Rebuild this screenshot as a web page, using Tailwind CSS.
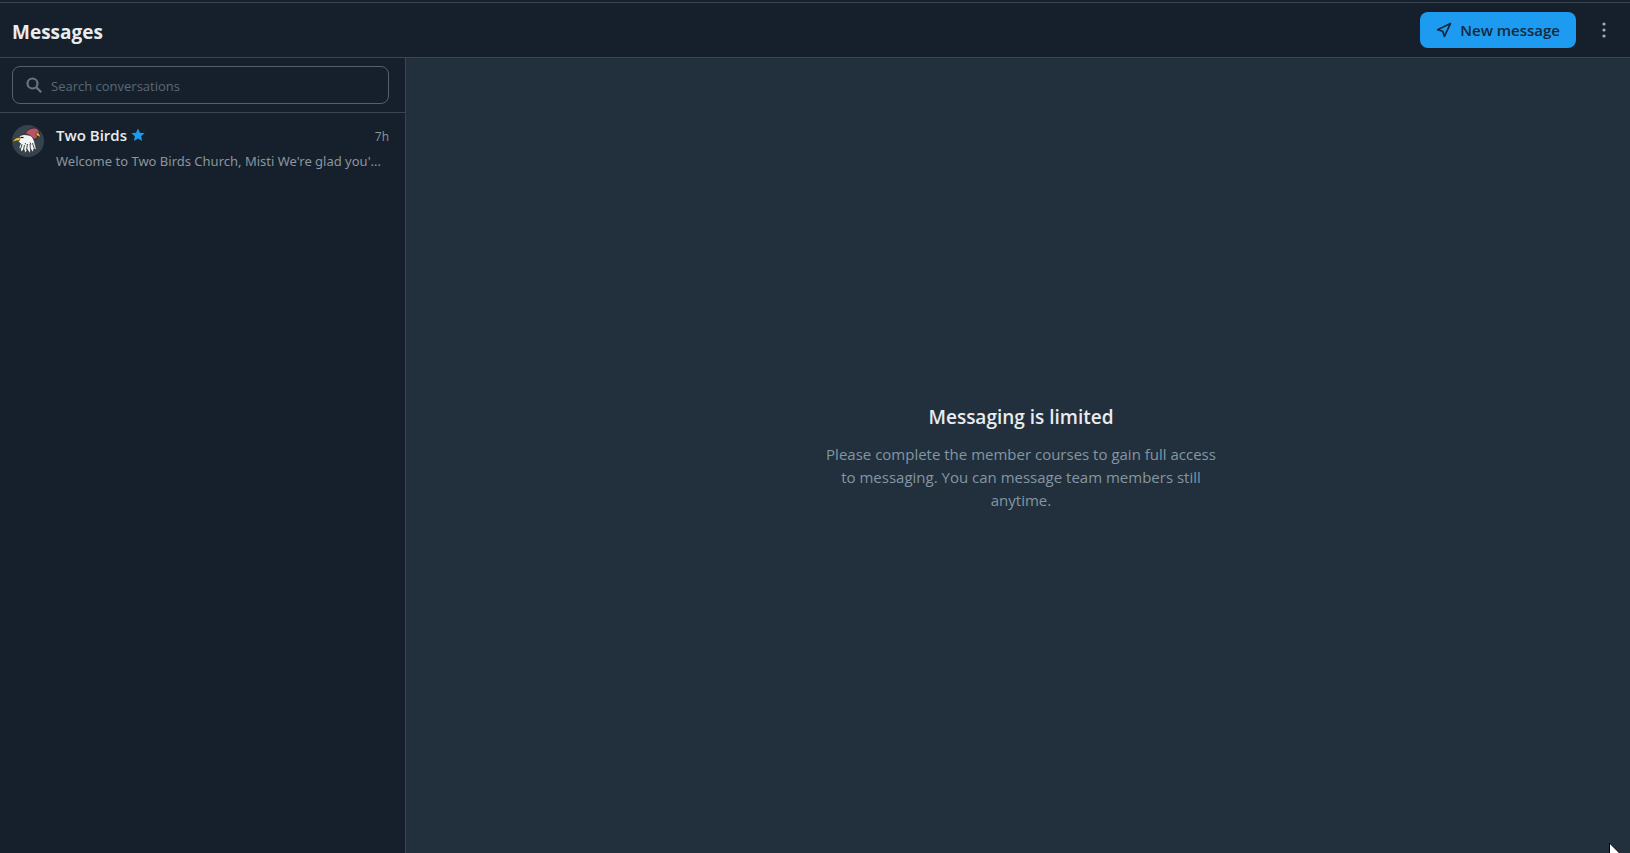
<!DOCTYPE html>
<html lang="en">
<head>
  <meta charset="UTF-8">
  <meta name="viewport" content="width=device-width, initial-scale=1.0">
  <title>Messages</title>
  <script src="https://cdn.jsdelivr.net/npm/@tailwindcss/browser@4"></script>
</head>
<body class="flex flex-col h-screen overflow-hidden bg-[#16202c] pt-[2px] font-['Open_Sans','Noto_Sans',sans-serif] text-[#e9ecee]">
  <!-- Header -->
  <header class="flex items-center justify-between h-14 shrink-0 border-y border-[#39454f] pl-3 pr-[14px]">
    <h1 class="text-[19px] leading-7 font-bold pt-1">Messages</h1>
    <div class="flex items-center gap-4">
      <button type="button" class="flex items-center gap-2 h-9 px-4 rounded-lg bg-[#1d9bf0] text-[#14293b] text-[15px] font-semibold">
        <svg class="size-4" viewBox="0 0 16 16" fill="none" stroke="currentColor" stroke-width="1.7" stroke-linejoin="round" aria-hidden="true">
          <path d="M14.4 1.6 1.6 7.7l5.2 1.5 1.6 5.2z"/>
        </svg>
        New message
      </button>
      <button type="button" aria-label="More options" class="flex items-center justify-center w-6 h-9 text-[#a3abb2]">
        <svg class="w-1 h-4" viewBox="0 0 4 16" fill="currentColor" aria-hidden="true">
          <circle cx="2" cy="2" r="1.6"/>
          <circle cx="2" cy="8" r="1.6"/>
          <circle cx="2" cy="14" r="1.6"/>
        </svg>
      </button>
    </div>
  </header>

  <div class="flex flex-1 min-h-0">
    <!-- Conversations -->
    <aside class="w-[406px] shrink-0 border-r border-[#39454f]">
      <div class="border-b border-[#39454f] pl-3 pr-4 py-2">
        <label for="search" class="flex items-center gap-2 h-[38px] px-3 rounded-lg border border-[#54616c]">
          <svg class="size-[18px] shrink-0 text-[#68747f]" viewBox="0 0 18 18" fill="none" stroke="currentColor" stroke-width="2.200" aria-hidden="true">
            <circle cx="7.500" cy="7.500" r="5"/>
            <path d="m11.200 11.200 5 5"/>
          </svg>
          <input id="search" type="search" placeholder="Search conversations" aria-label="Search conversations" class="flex-1 min-w-0 pt-1 bg-transparent text-[13px] outline-none placeholder:text-[#5b6873]">
        </label>
      </div>
      <ul>
        <li>
          <a href="#" class="flex gap-3 pl-3 pr-4 py-3">
            <svg class="size-8 shrink-0" viewBox="0 0 32 32" aria-hidden="true">
              <circle cx="16" cy="16" r="16" fill="#37434c"/>
              <!-- back bird -->
              <path d="M13.500 9c1-4 5-6 9-6 3 0 5 3 5 6l-2 2-1 3h-3c-2-3-4-4-8-5z" fill="#b85464" stroke="#241c24" stroke-width=".8"/>
              <path d="M24.500 7.500c2 0 4 2 3.700 5-1.500-1.500-2.700-1.700-4.200-2z" fill="#e4bc2c" stroke="#241c24" stroke-width=".5"/>
              <!-- front bird -->
              <path d="M6.500 13c1-3 5-4 9-3 4 0 6 3 7 7l2 8-2.500-1.500-1 4-2-3-1.500 4-2-4-2.500 4-1-4-3 2.500-.5-4-2 1 2-5.500c-2-1-3-3-2-5.500z" fill="#f4f4f1" stroke="#1c242b" stroke-width=".6"/>
              <path d="M8 12.500c-3-.5-6.500 1.500-7.500 5 2-1.500 4-2 7-2z" fill="#e4c62f" stroke="#241c24" stroke-width=".5"/>
              <path d="M8.500 12.500h3" fill="none" stroke="#111" stroke-width="1.200"/>
              <path d="m10 19-1 4m3.500-3-1 5m4-6-1 6m3.500-6 .5 6m2-7 1.500 5M13 18l1 1.500m4-2 1 2" fill="none" stroke="#1c242b" stroke-width=".8"/>
            </svg>
            <div class="flex-1 min-w-0">
              <div class="flex items-center justify-between">
                <div class="flex items-center gap-1">
                  <span class="text-[15px] leading-5 font-semibold">Two Birds</span>
                  <svg class="size-[14px] text-[#1d9bf0]" viewBox="0 0 14 14" fill="currentColor" aria-hidden="true">
                    <path d="m7 .4 1.900 4.300 4.700.5-3.500 3.100 1 4.600L7 10.500l-4.100 2.400 1-4.600L.4 5.200l4.700-.5z"/>
                  </svg>
                </div>
                <time class="pt-1 text-xs leading-4 text-[#8b959e]">7h</time>
              </div>
              <p class="mt-2 font-['Noto_Sans',sans-serif] text-[13px] leading-4 text-[#8b959e] whitespace-nowrap">Welcome to Two Birds Church, Misti We're glad you'...</p>
            </div>
          </a>
        </li>
      </ul>
    </aside>

    <!-- Empty state -->
    <main class="flex flex-1 flex-col items-center justify-center gap-3 bg-[#22303d] pt-1 pl-1.5 text-center">
      <h2 class="text-[19px] leading-7 font-semibold">Messaging is limited</h2>
      <p class="w-[400px] text-[15px] leading-[23px] text-[#8496a2]">Please complete the member courses to gain full access to messaging. You can message team members still anytime.</p>
    </main>
  </div>

  <!-- Mouse pointer -->
  <svg class="absolute left-[1609px] top-[843px] w-3 h-[10px]" viewBox="0 0 12 10" aria-hidden="true">
    <path d="M.5 0v12h12z" fill="#fff" stroke="#000"/>
  </svg>
</body>
</html>
